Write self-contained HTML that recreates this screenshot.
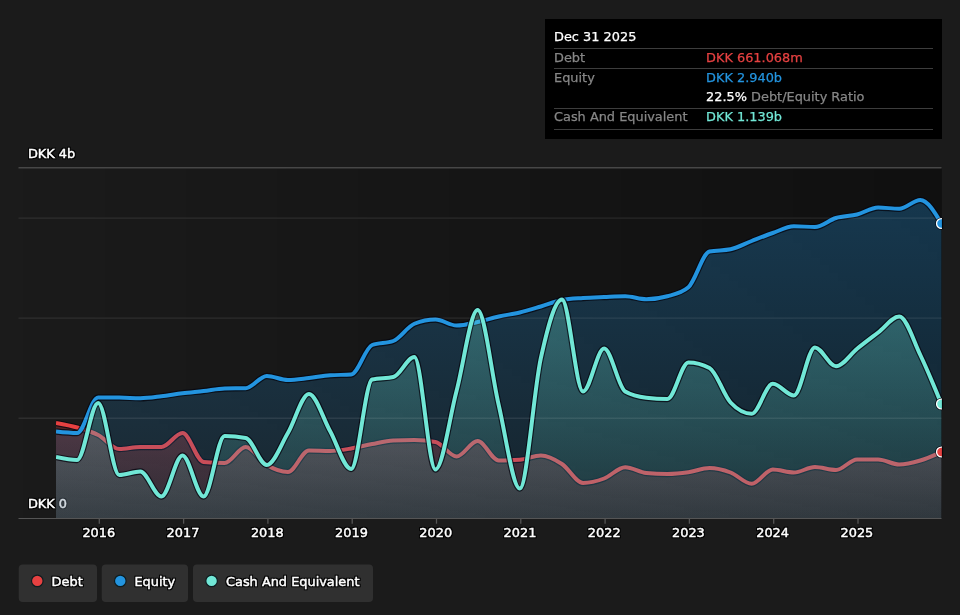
<!DOCTYPE html>
<html><head><meta charset="utf-8"><title>Debt Equity History</title>
<style>
html,body{margin:0;padding:0;background:#1b1b1b;}
body{width:960px;height:615px;overflow:hidden;position:relative;font-family:"DejaVu Sans","Liberation Sans",sans-serif;font-size:12.9px;color:#fff;}
svg{position:absolute;left:0;top:0;will-change:transform;}
svg text{font-family:"DejaVu Sans","Liberation Sans",sans-serif;font-size:12.9px;fill:#fff;}
.ax{stroke:#fff;stroke-width:0.45px;filter:url(#halo);}
.tip{position:absolute;left:545px;top:19px;width:397px;height:120px;background:#000;}
.tip div{position:absolute;white-space:nowrap;line-height:15px;margin-top:-0.5px;-webkit-text-stroke:0.25px currentColor;}
.tip .ln{margin-top:0;left:9px;width:378.8px;height:1px;background:#3d3d3d;}
.g{color:#878787;}
.gs{will-change:transform;}
</style></head><body>
<svg width="960" height="615" viewBox="0 0 960 615">
<defs>
<filter id="halo" x="-10%" y="-40%" width="120%" height="180%" color-interpolation-filters="sRGB"><feMorphology in="SourceAlpha" operator="dilate" radius="1.1" result="d"/><feGaussianBlur in="d" stdDeviation="0.45" result="b"/><feFlood flood-color="#000" flood-opacity="0.95"/><feComposite in2="b" operator="in" result="h"/><feMerge><feMergeNode in="h"/><feMergeNode in="SourceGraphic"/></feMerge></filter>
<linearGradient id="bg" x1="0" y1="0" x2="1" y2="0"><stop offset="0" stop-color="#000" stop-opacity="0"/><stop offset="1" stop-color="#000" stop-opacity="0.4"/></linearGradient>
<linearGradient id="gr" gradientUnits="userSpaceOnUse" x1="0" y1="420" x2="0" y2="518"><stop offset="0" stop-color="#e64141" stop-opacity="0.3"/><stop offset="1" stop-color="#e64141" stop-opacity="0.12"/></linearGradient>
<linearGradient id="gb" gradientUnits="userSpaceOnUse" x1="0" y1="200" x2="0" y2="518"><stop offset="0" stop-color="#2394df" stop-opacity="0.3"/><stop offset="1" stop-color="#2394df" stop-opacity="0.115"/></linearGradient>
<linearGradient id="gc" gradientUnits="userSpaceOnUse" x1="0" y1="300" x2="0" y2="518"><stop offset="0" stop-color="#71e7d6" stop-opacity="0.3"/><stop offset="1" stop-color="#71e7d6" stop-opacity="0.1"/></linearGradient>
<clipPath id="cp"><rect x="56" y="160" width="885.9" height="359"/></clipPath>
</defs>
<rect x="18.5" y="168" width="923.4" height="350.5" fill="url(#bg)"/>
<g stroke-width="1">
<line x1="18.5" y1="167.8" x2="941.5" y2="167.8" stroke="#474747" stroke-width="1.5"/>
</g>
<text x="27.9" y="157.9" class="ax">DKK 4b</text>
<text x="27.9" y="508.1" class="ax">DKK 0</text>
<g clip-path="url(#cp)">
<path d="M56.00,423.00C63.03,424.25,70.05,425.50,77.08,427.50C84.11,429.50,91.13,431.42,98.16,435.00C105.19,438.58,112.22,449.00,119.24,449.00C126.27,449.00,133.30,447.00,140.32,447.00C147.35,447.00,154.38,447.00,161.40,447.00C168.43,447.00,175.46,433.00,182.49,433.00C189.51,433.00,196.54,461.33,203.57,462.00C210.59,462.67,217.62,463.00,224.65,463.00C231.67,463.00,238.70,447.00,245.73,447.00C252.76,447.00,259.78,460.83,266.81,465.00C273.84,469.17,280.86,472.00,287.89,472.00C294.92,472.00,301.94,450.50,308.97,450.50C316.00,450.50,323.03,451.00,330.05,451.00C337.08,451.00,344.11,449.67,351.13,448.50C358.16,447.33,365.19,445.33,372.21,444.00C379.24,442.67,386.27,440.83,393.30,440.50C400.32,440.17,407.35,440.00,414.38,440.00C421.40,440.00,428.43,440.67,435.46,442.00C442.48,443.33,449.51,456.50,456.54,456.50C463.57,456.50,470.59,441.00,477.62,441.00C484.65,441.00,491.67,460.50,498.70,460.50C505.73,460.50,512.75,460.25,519.78,459.75C526.81,459.25,533.83,455.50,540.86,455.50C547.89,455.50,554.92,459.42,561.94,464.00C568.97,468.58,576.00,483.00,583.02,483.00C590.05,483.00,597.08,481.12,604.10,478.50C611.13,475.88,618.16,467.25,625.19,467.25C632.21,467.25,639.24,472.33,646.27,473.00C653.29,473.67,660.32,474.00,667.35,474.00C674.37,474.00,681.40,473.25,688.43,472.25C695.46,471.25,702.48,468.00,709.51,468.00C716.54,468.00,723.56,469.88,730.59,472.50C737.62,475.12,744.64,483.75,751.67,483.75C758.70,483.75,765.73,469.50,772.75,469.50C779.78,469.50,786.81,472.50,793.83,472.50C800.86,472.50,807.89,467.00,814.91,467.00C821.94,467.00,828.97,470.00,836.00,470.00C843.02,470.00,850.05,459.50,857.08,459.50C864.10,459.50,871.13,459.50,878.16,459.50C885.18,459.50,892.21,464.50,899.24,464.50C906.27,464.50,913.29,462.58,920.32,460.50C927.35,458.42,934.37,455.21,941.40,452.00L941.40,518.5L56.00,518.5Z" fill="url(#gr)"/>
<path d="M56.00,423.00C63.03,424.25,70.05,425.50,77.08,427.50C84.11,429.50,91.13,431.42,98.16,435.00C105.19,438.58,112.22,449.00,119.24,449.00C126.27,449.00,133.30,447.00,140.32,447.00C147.35,447.00,154.38,447.00,161.40,447.00C168.43,447.00,175.46,433.00,182.49,433.00C189.51,433.00,196.54,461.33,203.57,462.00C210.59,462.67,217.62,463.00,224.65,463.00C231.67,463.00,238.70,447.00,245.73,447.00C252.76,447.00,259.78,460.83,266.81,465.00C273.84,469.17,280.86,472.00,287.89,472.00C294.92,472.00,301.94,450.50,308.97,450.50C316.00,450.50,323.03,451.00,330.05,451.00C337.08,451.00,344.11,449.67,351.13,448.50C358.16,447.33,365.19,445.33,372.21,444.00C379.24,442.67,386.27,440.83,393.30,440.50C400.32,440.17,407.35,440.00,414.38,440.00C421.40,440.00,428.43,440.67,435.46,442.00C442.48,443.33,449.51,456.50,456.54,456.50C463.57,456.50,470.59,441.00,477.62,441.00C484.65,441.00,491.67,460.50,498.70,460.50C505.73,460.50,512.75,460.25,519.78,459.75C526.81,459.25,533.83,455.50,540.86,455.50C547.89,455.50,554.92,459.42,561.94,464.00C568.97,468.58,576.00,483.00,583.02,483.00C590.05,483.00,597.08,481.12,604.10,478.50C611.13,475.88,618.16,467.25,625.19,467.25C632.21,467.25,639.24,472.33,646.27,473.00C653.29,473.67,660.32,474.00,667.35,474.00C674.37,474.00,681.40,473.25,688.43,472.25C695.46,471.25,702.48,468.00,709.51,468.00C716.54,468.00,723.56,469.88,730.59,472.50C737.62,475.12,744.64,483.75,751.67,483.75C758.70,483.75,765.73,469.50,772.75,469.50C779.78,469.50,786.81,472.50,793.83,472.50C800.86,472.50,807.89,467.00,814.91,467.00C821.94,467.00,828.97,470.00,836.00,470.00C843.02,470.00,850.05,459.50,857.08,459.50C864.10,459.50,871.13,459.50,878.16,459.50C885.18,459.50,892.21,464.50,899.24,464.50C906.27,464.50,913.29,462.58,920.32,460.50C927.35,458.42,934.37,455.21,941.40,452.00" fill="none" stroke="#05060f" stroke-opacity="0.75" stroke-width="6.3" stroke-linejoin="round"/>
<path d="M56.00,423.00C63.03,424.25,70.05,425.50,77.08,427.50C84.11,429.50,91.13,431.42,98.16,435.00C105.19,438.58,112.22,449.00,119.24,449.00C126.27,449.00,133.30,447.00,140.32,447.00C147.35,447.00,154.38,447.00,161.40,447.00C168.43,447.00,175.46,433.00,182.49,433.00C189.51,433.00,196.54,461.33,203.57,462.00C210.59,462.67,217.62,463.00,224.65,463.00C231.67,463.00,238.70,447.00,245.73,447.00C252.76,447.00,259.78,460.83,266.81,465.00C273.84,469.17,280.86,472.00,287.89,472.00C294.92,472.00,301.94,450.50,308.97,450.50C316.00,450.50,323.03,451.00,330.05,451.00C337.08,451.00,344.11,449.67,351.13,448.50C358.16,447.33,365.19,445.33,372.21,444.00C379.24,442.67,386.27,440.83,393.30,440.50C400.32,440.17,407.35,440.00,414.38,440.00C421.40,440.00,428.43,440.67,435.46,442.00C442.48,443.33,449.51,456.50,456.54,456.50C463.57,456.50,470.59,441.00,477.62,441.00C484.65,441.00,491.67,460.50,498.70,460.50C505.73,460.50,512.75,460.25,519.78,459.75C526.81,459.25,533.83,455.50,540.86,455.50C547.89,455.50,554.92,459.42,561.94,464.00C568.97,468.58,576.00,483.00,583.02,483.00C590.05,483.00,597.08,481.12,604.10,478.50C611.13,475.88,618.16,467.25,625.19,467.25C632.21,467.25,639.24,472.33,646.27,473.00C653.29,473.67,660.32,474.00,667.35,474.00C674.37,474.00,681.40,473.25,688.43,472.25C695.46,471.25,702.48,468.00,709.51,468.00C716.54,468.00,723.56,469.88,730.59,472.50C737.62,475.12,744.64,483.75,751.67,483.75C758.70,483.75,765.73,469.50,772.75,469.50C779.78,469.50,786.81,472.50,793.83,472.50C800.86,472.50,807.89,467.00,814.91,467.00C821.94,467.00,828.97,470.00,836.00,470.00C843.02,470.00,850.05,459.50,857.08,459.50C864.10,459.50,871.13,459.50,878.16,459.50C885.18,459.50,892.21,464.50,899.24,464.50C906.27,464.50,913.29,462.58,920.32,460.50C927.35,458.42,934.37,455.21,941.40,452.00" fill="none" stroke="#e64141" stroke-width="4.0" stroke-linejoin="round"/>

<path d="M56.00,431.50C63.03,432.25,70.05,433.00,77.08,433.00C84.11,433.00,91.13,397.50,98.16,397.50C105.19,397.50,112.22,397.50,119.24,397.50C126.27,397.50,133.30,398.30,140.32,398.30C147.35,398.30,154.38,397.15,161.40,396.30C168.43,395.45,175.46,394.08,182.49,393.20C189.51,392.32,196.54,391.78,203.57,391.00C210.59,390.22,217.62,388.70,224.65,388.50C231.67,388.30,238.70,388.40,245.73,388.20C252.76,388.00,259.78,376.00,266.81,376.00C273.84,376.00,280.86,380.00,287.89,380.00C294.92,380.00,301.94,378.79,308.97,378.00C316.00,377.21,323.03,375.75,330.05,375.25C337.08,374.75,344.11,375.00,351.13,374.50C358.16,374.00,365.19,347.67,372.21,345.00C379.24,342.33,386.27,343.67,393.30,341.00C400.32,338.33,407.35,326.58,414.38,323.75C421.40,320.92,428.43,319.50,435.46,319.50C442.48,319.50,449.51,325.50,456.54,325.50C463.57,325.50,470.59,323.50,477.62,322.00C484.65,320.50,491.67,318.08,498.70,316.50C505.73,314.92,512.75,314.17,519.78,312.50C526.81,310.83,533.83,308.58,540.86,306.50C547.89,304.42,554.92,301.33,561.94,300.00C568.97,298.67,576.00,298.50,583.02,298.00C590.05,297.50,597.08,297.29,604.10,297.00C611.13,296.71,618.16,296.25,625.19,296.25C632.21,296.25,639.24,299.25,646.27,299.25C653.29,299.25,660.32,298.25,667.35,296.25C674.37,294.25,681.40,293.23,688.43,287.20C695.46,281.17,702.48,252.97,709.51,251.50C716.54,250.03,723.56,250.77,730.59,249.30C737.62,247.83,744.64,243.72,751.67,241.00C758.70,238.28,765.73,235.46,772.75,233.00C779.78,230.54,786.81,226.25,793.83,226.25C800.86,226.25,807.89,227.00,814.91,227.00C821.94,227.00,828.97,220.08,836.00,218.00C843.02,215.92,850.05,216.25,857.08,214.50C864.10,212.75,871.13,207.50,878.16,207.50C885.18,207.50,892.21,208.75,899.24,208.75C906.27,208.75,913.29,200.00,920.32,200.00C927.35,200.00,934.37,211.75,941.40,223.50L941.40,518.5L56.00,518.5Z" fill="url(#gb)"/>
<path d="M56.00,431.50C63.03,432.25,70.05,433.00,77.08,433.00C84.11,433.00,91.13,397.50,98.16,397.50C105.19,397.50,112.22,397.50,119.24,397.50C126.27,397.50,133.30,398.30,140.32,398.30C147.35,398.30,154.38,397.15,161.40,396.30C168.43,395.45,175.46,394.08,182.49,393.20C189.51,392.32,196.54,391.78,203.57,391.00C210.59,390.22,217.62,388.70,224.65,388.50C231.67,388.30,238.70,388.40,245.73,388.20C252.76,388.00,259.78,376.00,266.81,376.00C273.84,376.00,280.86,380.00,287.89,380.00C294.92,380.00,301.94,378.79,308.97,378.00C316.00,377.21,323.03,375.75,330.05,375.25C337.08,374.75,344.11,375.00,351.13,374.50C358.16,374.00,365.19,347.67,372.21,345.00C379.24,342.33,386.27,343.67,393.30,341.00C400.32,338.33,407.35,326.58,414.38,323.75C421.40,320.92,428.43,319.50,435.46,319.50C442.48,319.50,449.51,325.50,456.54,325.50C463.57,325.50,470.59,323.50,477.62,322.00C484.65,320.50,491.67,318.08,498.70,316.50C505.73,314.92,512.75,314.17,519.78,312.50C526.81,310.83,533.83,308.58,540.86,306.50C547.89,304.42,554.92,301.33,561.94,300.00C568.97,298.67,576.00,298.50,583.02,298.00C590.05,297.50,597.08,297.29,604.10,297.00C611.13,296.71,618.16,296.25,625.19,296.25C632.21,296.25,639.24,299.25,646.27,299.25C653.29,299.25,660.32,298.25,667.35,296.25C674.37,294.25,681.40,293.23,688.43,287.20C695.46,281.17,702.48,252.97,709.51,251.50C716.54,250.03,723.56,250.77,730.59,249.30C737.62,247.83,744.64,243.72,751.67,241.00C758.70,238.28,765.73,235.46,772.75,233.00C779.78,230.54,786.81,226.25,793.83,226.25C800.86,226.25,807.89,227.00,814.91,227.00C821.94,227.00,828.97,220.08,836.00,218.00C843.02,215.92,850.05,216.25,857.08,214.50C864.10,212.75,871.13,207.50,878.16,207.50C885.18,207.50,892.21,208.75,899.24,208.75C906.27,208.75,913.29,200.00,920.32,200.00C927.35,200.00,934.37,211.75,941.40,223.50" fill="none" stroke="#05060f" stroke-opacity="0.75" stroke-width="6.3" stroke-linejoin="round"/>
<path d="M56.00,431.50C63.03,432.25,70.05,433.00,77.08,433.00C84.11,433.00,91.13,397.50,98.16,397.50C105.19,397.50,112.22,397.50,119.24,397.50C126.27,397.50,133.30,398.30,140.32,398.30C147.35,398.30,154.38,397.15,161.40,396.30C168.43,395.45,175.46,394.08,182.49,393.20C189.51,392.32,196.54,391.78,203.57,391.00C210.59,390.22,217.62,388.70,224.65,388.50C231.67,388.30,238.70,388.40,245.73,388.20C252.76,388.00,259.78,376.00,266.81,376.00C273.84,376.00,280.86,380.00,287.89,380.00C294.92,380.00,301.94,378.79,308.97,378.00C316.00,377.21,323.03,375.75,330.05,375.25C337.08,374.75,344.11,375.00,351.13,374.50C358.16,374.00,365.19,347.67,372.21,345.00C379.24,342.33,386.27,343.67,393.30,341.00C400.32,338.33,407.35,326.58,414.38,323.75C421.40,320.92,428.43,319.50,435.46,319.50C442.48,319.50,449.51,325.50,456.54,325.50C463.57,325.50,470.59,323.50,477.62,322.00C484.65,320.50,491.67,318.08,498.70,316.50C505.73,314.92,512.75,314.17,519.78,312.50C526.81,310.83,533.83,308.58,540.86,306.50C547.89,304.42,554.92,301.33,561.94,300.00C568.97,298.67,576.00,298.50,583.02,298.00C590.05,297.50,597.08,297.29,604.10,297.00C611.13,296.71,618.16,296.25,625.19,296.25C632.21,296.25,639.24,299.25,646.27,299.25C653.29,299.25,660.32,298.25,667.35,296.25C674.37,294.25,681.40,293.23,688.43,287.20C695.46,281.17,702.48,252.97,709.51,251.50C716.54,250.03,723.56,250.77,730.59,249.30C737.62,247.83,744.64,243.72,751.67,241.00C758.70,238.28,765.73,235.46,772.75,233.00C779.78,230.54,786.81,226.25,793.83,226.25C800.86,226.25,807.89,227.00,814.91,227.00C821.94,227.00,828.97,220.08,836.00,218.00C843.02,215.92,850.05,216.25,857.08,214.50C864.10,212.75,871.13,207.50,878.16,207.50C885.18,207.50,892.21,208.75,899.24,208.75C906.27,208.75,913.29,200.00,920.32,200.00C927.35,200.00,934.37,211.75,941.40,223.50" fill="none" stroke="#2394df" stroke-width="4.0" stroke-linejoin="round"/>

<path d="M56.00,457.00C63.03,458.50,70.05,460.00,77.08,460.00C84.11,460.00,91.13,403.00,98.16,403.00C105.19,403.00,112.22,475.00,119.24,475.00C126.27,475.00,133.30,471.50,140.32,471.50C147.35,471.50,154.38,496.50,161.40,496.50C168.43,496.50,175.46,455.50,182.49,455.50C189.51,455.50,196.54,496.50,203.57,496.50C210.59,496.50,217.62,436.00,224.65,436.00C231.67,436.00,238.70,436.67,245.73,438.00C252.76,439.33,259.78,465.00,266.81,465.00C273.84,465.00,280.86,444.83,287.89,433.00C294.92,421.17,301.94,394.00,308.97,394.00C316.00,394.00,323.03,418.50,330.05,431.00C337.08,443.50,344.11,469.00,351.13,469.00C358.16,469.00,365.19,381.17,372.21,379.50C379.24,377.83,386.27,378.67,393.30,377.00C400.32,375.33,407.35,357.00,414.38,357.00C421.40,357.00,428.43,469.50,435.46,469.50C442.48,469.50,449.51,417.58,456.54,391.00C463.57,364.42,470.59,310.00,477.62,310.00C484.65,310.00,491.67,375.25,498.70,405.00C505.73,434.75,512.75,488.50,519.78,488.50C526.81,488.50,533.83,389.50,540.86,358.00C547.89,326.50,554.92,299.50,561.94,299.50C568.97,299.50,576.00,391.50,583.02,391.50C590.05,391.50,597.08,348.50,604.10,348.50C611.13,348.50,618.16,387.33,625.19,391.50C632.21,395.67,639.24,396.92,646.27,397.75C653.29,398.58,660.32,399.00,667.35,399.00C674.37,399.00,681.40,362.50,688.43,362.50C695.46,362.50,702.48,364.33,709.51,368.00C716.54,371.67,723.56,395.00,730.59,402.50C737.62,410.00,744.64,413.75,751.67,413.75C758.70,413.75,765.73,383.75,772.75,383.75C779.78,383.75,786.81,395.50,793.83,395.50C800.86,395.50,807.89,347.50,814.91,347.50C821.94,347.50,828.97,366.25,836.00,366.25C843.02,366.25,850.05,354.38,857.08,348.75C864.10,343.12,871.13,337.88,878.16,332.50C885.18,327.12,892.21,316.50,899.24,316.50C906.27,316.50,913.29,340.42,920.32,355.00C927.35,369.58,934.37,386.79,941.40,404.00L941.40,518.5L56.00,518.5Z" fill="url(#gc)"/>
<path d="M56.00,457.00C63.03,458.50,70.05,460.00,77.08,460.00C84.11,460.00,91.13,403.00,98.16,403.00C105.19,403.00,112.22,475.00,119.24,475.00C126.27,475.00,133.30,471.50,140.32,471.50C147.35,471.50,154.38,496.50,161.40,496.50C168.43,496.50,175.46,455.50,182.49,455.50C189.51,455.50,196.54,496.50,203.57,496.50C210.59,496.50,217.62,436.00,224.65,436.00C231.67,436.00,238.70,436.67,245.73,438.00C252.76,439.33,259.78,465.00,266.81,465.00C273.84,465.00,280.86,444.83,287.89,433.00C294.92,421.17,301.94,394.00,308.97,394.00C316.00,394.00,323.03,418.50,330.05,431.00C337.08,443.50,344.11,469.00,351.13,469.00C358.16,469.00,365.19,381.17,372.21,379.50C379.24,377.83,386.27,378.67,393.30,377.00C400.32,375.33,407.35,357.00,414.38,357.00C421.40,357.00,428.43,469.50,435.46,469.50C442.48,469.50,449.51,417.58,456.54,391.00C463.57,364.42,470.59,310.00,477.62,310.00C484.65,310.00,491.67,375.25,498.70,405.00C505.73,434.75,512.75,488.50,519.78,488.50C526.81,488.50,533.83,389.50,540.86,358.00C547.89,326.50,554.92,299.50,561.94,299.50C568.97,299.50,576.00,391.50,583.02,391.50C590.05,391.50,597.08,348.50,604.10,348.50C611.13,348.50,618.16,387.33,625.19,391.50C632.21,395.67,639.24,396.92,646.27,397.75C653.29,398.58,660.32,399.00,667.35,399.00C674.37,399.00,681.40,362.50,688.43,362.50C695.46,362.50,702.48,364.33,709.51,368.00C716.54,371.67,723.56,395.00,730.59,402.50C737.62,410.00,744.64,413.75,751.67,413.75C758.70,413.75,765.73,383.75,772.75,383.75C779.78,383.75,786.81,395.50,793.83,395.50C800.86,395.50,807.89,347.50,814.91,347.50C821.94,347.50,828.97,366.25,836.00,366.25C843.02,366.25,850.05,354.38,857.08,348.75C864.10,343.12,871.13,337.88,878.16,332.50C885.18,327.12,892.21,316.50,899.24,316.50C906.27,316.50,913.29,340.42,920.32,355.00C927.35,369.58,934.37,386.79,941.40,404.00" fill="none" stroke="#05060f" stroke-opacity="0.75" stroke-width="6.3" stroke-linejoin="round"/>
<path d="M56.00,457.00C63.03,458.50,70.05,460.00,77.08,460.00C84.11,460.00,91.13,403.00,98.16,403.00C105.19,403.00,112.22,475.00,119.24,475.00C126.27,475.00,133.30,471.50,140.32,471.50C147.35,471.50,154.38,496.50,161.40,496.50C168.43,496.50,175.46,455.50,182.49,455.50C189.51,455.50,196.54,496.50,203.57,496.50C210.59,496.50,217.62,436.00,224.65,436.00C231.67,436.00,238.70,436.67,245.73,438.00C252.76,439.33,259.78,465.00,266.81,465.00C273.84,465.00,280.86,444.83,287.89,433.00C294.92,421.17,301.94,394.00,308.97,394.00C316.00,394.00,323.03,418.50,330.05,431.00C337.08,443.50,344.11,469.00,351.13,469.00C358.16,469.00,365.19,381.17,372.21,379.50C379.24,377.83,386.27,378.67,393.30,377.00C400.32,375.33,407.35,357.00,414.38,357.00C421.40,357.00,428.43,469.50,435.46,469.50C442.48,469.50,449.51,417.58,456.54,391.00C463.57,364.42,470.59,310.00,477.62,310.00C484.65,310.00,491.67,375.25,498.70,405.00C505.73,434.75,512.75,488.50,519.78,488.50C526.81,488.50,533.83,389.50,540.86,358.00C547.89,326.50,554.92,299.50,561.94,299.50C568.97,299.50,576.00,391.50,583.02,391.50C590.05,391.50,597.08,348.50,604.10,348.50C611.13,348.50,618.16,387.33,625.19,391.50C632.21,395.67,639.24,396.92,646.27,397.75C653.29,398.58,660.32,399.00,667.35,399.00C674.37,399.00,681.40,362.50,688.43,362.50C695.46,362.50,702.48,364.33,709.51,368.00C716.54,371.67,723.56,395.00,730.59,402.50C737.62,410.00,744.64,413.75,751.67,413.75C758.70,413.75,765.73,383.75,772.75,383.75C779.78,383.75,786.81,395.50,793.83,395.50C800.86,395.50,807.89,347.50,814.91,347.50C821.94,347.50,828.97,366.25,836.00,366.25C843.02,366.25,850.05,354.38,857.08,348.75C864.10,343.12,871.13,337.88,878.16,332.50C885.18,327.12,892.21,316.50,899.24,316.50C906.27,316.50,913.29,340.42,920.32,355.00C927.35,369.58,934.37,386.79,941.40,404.00" fill="none" stroke="#71e7d6" stroke-width="4.0" stroke-linejoin="round"/>

<circle cx="941.4" cy="452.0" r="6.3" fill="#03040c" fill-opacity="0.75"/><circle cx="941.4" cy="452.0" r="4.85" fill="#e64141" stroke="#fff" stroke-width="1.3"/>
<circle cx="941.4" cy="223.5" r="6.3" fill="#03040c" fill-opacity="0.75"/><circle cx="941.4" cy="223.5" r="4.85" fill="#2394df" stroke="#fff" stroke-width="1.3"/>
<circle cx="941.4" cy="404.0" r="6.3" fill="#03040c" fill-opacity="0.75"/><circle cx="941.4" cy="404.0" r="4.85" fill="#71e7d6" stroke="#fff" stroke-width="1.3"/>

</g>
<rect x="941.9" y="446.4" width="1.2" height="11.2" fill="#050508" fill-opacity="0.9"/>
<rect x="941.9" y="217.9" width="1.2" height="11.2" fill="#050508" fill-opacity="0.9"/>
<rect x="941.9" y="398.4" width="1.2" height="11.2" fill="#050508" fill-opacity="0.9"/>
<g stroke="#fff" stroke-opacity="0.085" stroke-width="1.4">
<line x1="18.5" y1="218.1" x2="941.5" y2="218.1"/>
<line x1="18.5" y1="318.1" x2="941.5" y2="318.1"/>
<line x1="18.5" y1="418.2" x2="941.5" y2="418.2"/>
</g>
<line x1="18.5" y1="518.5" x2="941.5" y2="518.5" stroke="#555" stroke-width="1"/>
<line x1="99.3" y1="518" x2="99.3" y2="523.7" stroke="#555" stroke-width="1.3"/><text x="98.8" y="537.1" text-anchor="middle" class="ax">2016</text>
<line x1="183.6" y1="518" x2="183.6" y2="523.7" stroke="#555" stroke-width="1.3"/><text x="183.0" y="537.1" text-anchor="middle" class="ax">2017</text>
<line x1="267.9" y1="518" x2="267.9" y2="523.7" stroke="#555" stroke-width="1.3"/><text x="267.3" y="537.1" text-anchor="middle" class="ax">2018</text>
<line x1="352.2" y1="518" x2="352.2" y2="523.7" stroke="#555" stroke-width="1.3"/><text x="351.5" y="537.1" text-anchor="middle" class="ax">2019</text>
<line x1="436.5" y1="518" x2="436.5" y2="523.7" stroke="#555" stroke-width="1.3"/><text x="435.7" y="537.1" text-anchor="middle" class="ax">2020</text>
<line x1="520.8" y1="518" x2="520.8" y2="523.7" stroke="#555" stroke-width="1.3"/><text x="520.0" y="537.1" text-anchor="middle" class="ax">2021</text>
<line x1="605.1" y1="518" x2="605.1" y2="523.7" stroke="#555" stroke-width="1.3"/><text x="604.2" y="537.1" text-anchor="middle" class="ax">2022</text>
<line x1="689.4" y1="518" x2="689.4" y2="523.7" stroke="#555" stroke-width="1.3"/><text x="688.4" y="537.1" text-anchor="middle" class="ax">2023</text>
<line x1="773.7" y1="518" x2="773.7" y2="523.7" stroke="#555" stroke-width="1.3"/><text x="772.6" y="537.1" text-anchor="middle" class="ax">2024</text>
<line x1="858.0" y1="518" x2="858.0" y2="523.7" stroke="#555" stroke-width="1.3"/><text x="856.9" y="537.1" text-anchor="middle" class="ax">2025</text>

<g>
<rect x="18.75" y="564.6" width="78.25" height="37.5" rx="4" fill="#303030"/>
<rect x="101.75" y="564.6" width="86.25" height="37.5" rx="4" fill="#303030"/>
<rect x="193" y="564.6" width="180" height="37.5" rx="4" fill="#303030"/>
<circle cx="37.3" cy="580.9" r="5.8" fill="#e64141" stroke="#0e1d20" stroke-width="1.2"/>
<circle cx="120.3" cy="580.9" r="5.8" fill="#2394df" stroke="#0e1d20" stroke-width="1.2"/>
<circle cx="211.6" cy="580.9" r="5.8" fill="#71e7d6" stroke="#0e1d20" stroke-width="1.2"/>
<text x="51.6" y="585.5" class="ax">Debt</text>
<text x="134.4" y="585.5" class="ax">Equity</text>
<text x="226" y="585.5" class="ax">Cash And Equivalent</text>
</g>
</svg>
<div class="tip gs">
<div style="left:9px;top:10px;">Dec 31 2025</div>
<div class="ln" style="top:29px"></div>
<div class="g" style="left:9px;top:31px;">Debt</div><div style="left:161px;top:31px;color:#e64141">DKK 661.068m</div>
<div class="ln" style="top:49px"></div>
<div class="g" style="left:9px;top:51px;">Equity</div><div style="left:161px;top:51px;color:#2394df">DKK 2.940b</div>
<div style="left:161px;top:70.5px;">22.5% <span class="g">Debt/Equity Ratio</span></div>
<div class="ln" style="top:89px"></div>
<div class="g" style="left:9px;top:90.5px;">Cash And Equivalent</div><div style="left:161px;top:90.5px;color:#71e7d6">DKK 1.139b</div>
<div class="ln" style="top:109.5px"></div>
</div>
</body></html>
